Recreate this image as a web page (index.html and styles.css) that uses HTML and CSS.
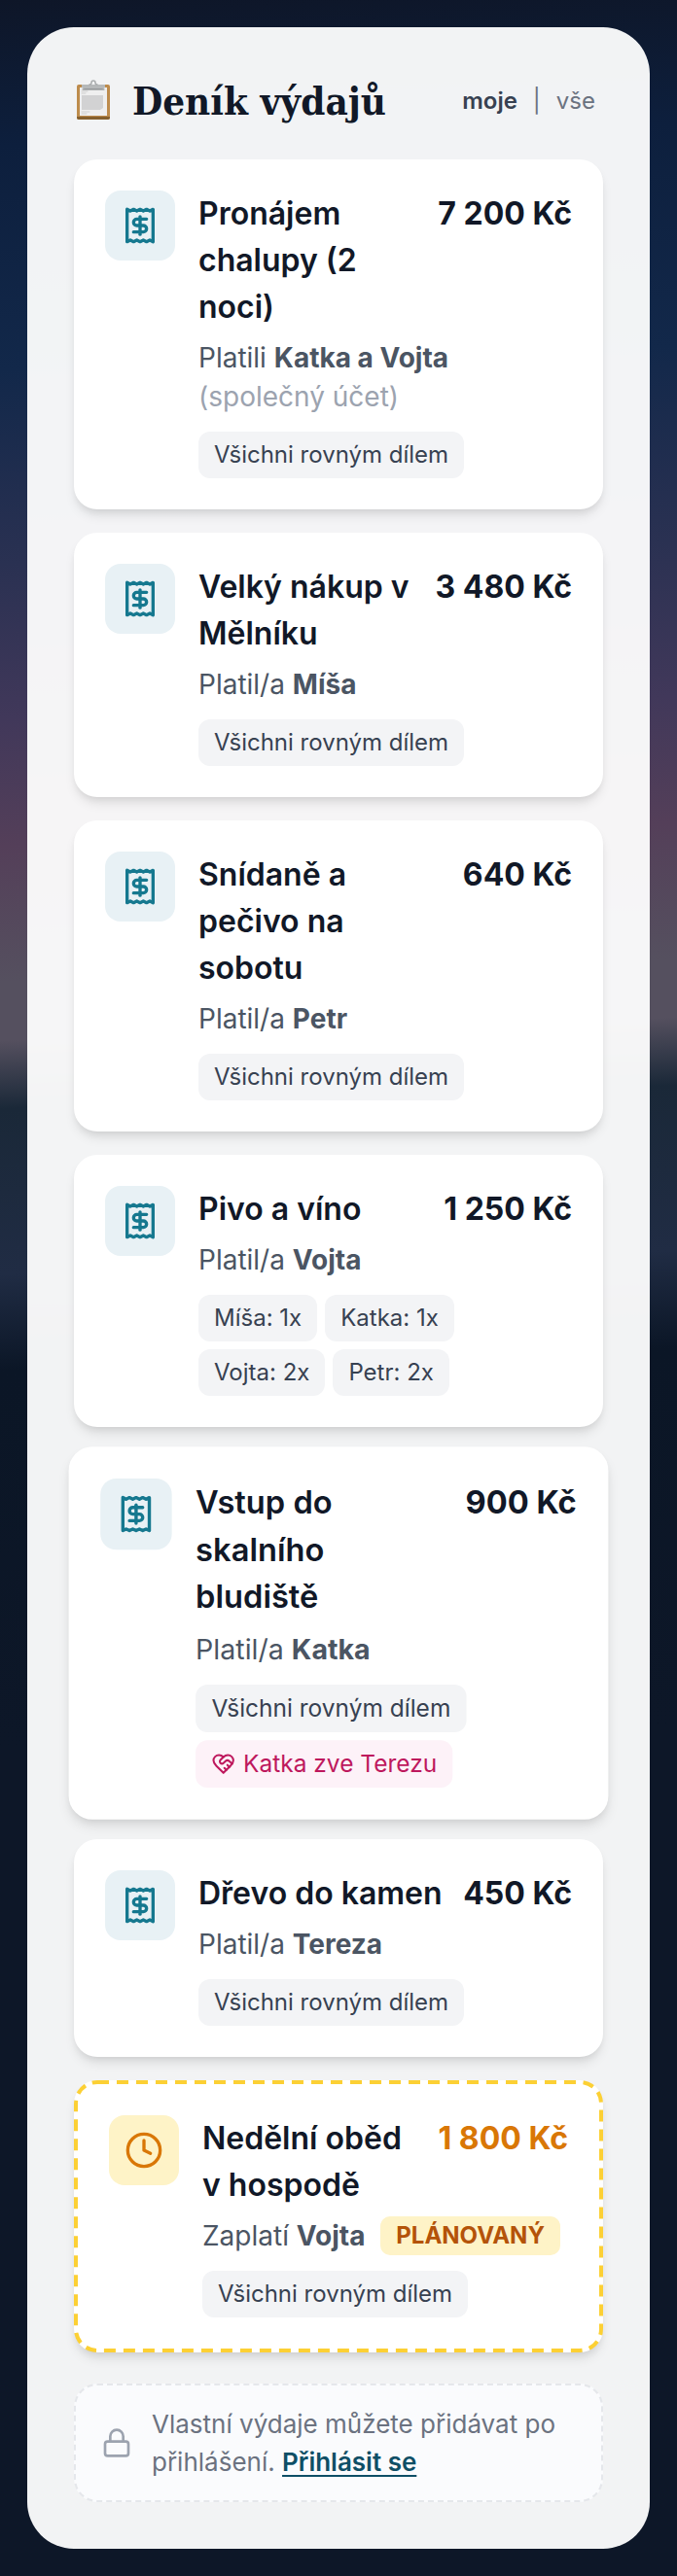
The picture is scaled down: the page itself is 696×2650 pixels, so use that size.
FILE: index.html
```html
<!DOCTYPE html>
<html lang="cs">

<head>
    <meta charset="UTF-8">
    <meta name="viewport" content="width=device-width, initial-scale=1.0">
    <title>Deník výdajů</title>
    <link rel="stylesheet" href="styles.css">
</head>

<body>
    <!-- shared icons -->
    <svg class="sprite" aria-hidden="true">
        <symbol id="receipt" viewBox="0 0 24 24">
            <path d="M4 2v20l2-1 2 1 2-1 2 1 2-1 2 1 2-1 2 1V2l-2 1-2-1-2 1-2-1-2 1-2-1-2 1Z" />
            <path d="M16 8h-6a2 2 0 1 0 0 4h4a2 2 0 1 1 0 4H8" />
            <path d="M12 17.5v-11" />
        </symbol>
        <symbol id="clock" viewBox="0 0 24 24">
            <circle cx="12" cy="12" r="10" />
            <path d="M12 6v6l4 2" />
        </symbol>
        <symbol id="lock" viewBox="0 0 24 24">
            <rect x="3" y="11" width="18" height="11" rx="2" />
            <path d="M7 11V7a5 5 0 0 1 10 0v4" />
        </symbol>
        <symbol id="heart" viewBox="0 0 24 24">
            <path d="M19 14c1.49-1.46 3-3.21 3-5.5A5.5 5.5 0 0 0 16.5 3c-1.76 0-3 .5-4.5 2-1.5-1.5-2.74-2-4.5-2A5.5 5.5 0 0 0 2 8.5c0 2.3 1.5 4.05 3 5.5l7 7Z" />
            <path d="M12 5 9.04 7.96a2.17 2.17 0 0 0 0 3.08c.82.82 2.13.85 3 .07l2.07-1.9a2.82 2.82 0 0 1 3.79 0l2.96 2.66" />
            <path d="m18 15-2-2" />
            <path d="m15 18-2-2" />
        </symbol>
    </svg>

    <main class="panel">
        <header class="panel-header">
            <svg class="clipboard" viewBox="0 0 40 44" aria-hidden="true">
                <rect x="3" y="5" width="34" height="36" rx="2" fill="#bd8b4c" />
                <path d="M3 38h34v1a2 2 0 0 1-2 2H5a2 2 0 0 1-2-2z" fill="#85602f" />
                <path d="M6 8h28v29H6z" fill="#efefef" />
                <path d="M8 16h22v13l-3 2H8z" fill="#d2d2d3" />
                <path d="M8 12h6M8 14h4M8 33h8M8 35h5" stroke="#cfcfcf" />
                <path d="M8 5h24v3l-3 2H11l-3-2z" fill="#b5b8b9" />
                <path d="M9 10h22" stroke="#777b7c" />
                <path d="M16 5c1 0 2-1 2-2a2 2 0 0 1 4 0c0 1 1 2 2 2" stroke="#a9acad" stroke-width="1.5" />
            </svg>
            <h1>Deník výdajů</h1>
            <div class="filter">
                <button type="button" class="active">moje</button>
                <span>|</span>
                <button type="button">vše</button>
            </div>
        </header>

        <div class="expenses">
            <article class="card">
                <div class="card-icon"><svg><use href="#receipt" /></svg></div>
                <div class="card-body">
                    <div class="card-top">
                        <h2>Pronájem chalupy (2 noci)</h2>
                        <div class="amount">7 200 Kč</div>
                    </div>
                    <p class="payer">Platili <strong>Katka a Vojta</strong> <span class="muted">(společný účet)</span></p>
                    <div class="tags"><span class="tag">Všichni rovným dílem</span></div>
                </div>
            </article>

            <article class="card">
                <div class="card-icon"><svg><use href="#receipt" /></svg></div>
                <div class="card-body">
                    <div class="card-top">
                        <h2>Velký nákup v Mělníku</h2>
                        <div class="amount">3 480 Kč</div>
                    </div>
                    <p class="payer">Platil/a <strong>Míša</strong></p>
                    <div class="tags"><span class="tag">Všichni rovným dílem</span></div>
                </div>
            </article>

            <article class="card">
                <div class="card-icon"><svg><use href="#receipt" /></svg></div>
                <div class="card-body">
                    <div class="card-top">
                        <h2>Snídaně a pečivo na sobotu</h2>
                        <div class="amount">640 Kč</div>
                    </div>
                    <p class="payer">Platil/a <strong>Petr</strong></p>
                    <div class="tags"><span class="tag">Všichni rovným dílem</span></div>
                </div>
            </article>

            <article class="card">
                <div class="card-icon"><svg><use href="#receipt" /></svg></div>
                <div class="card-body">
                    <div class="card-top">
                        <h2>Pivo a víno</h2>
                        <div class="amount">1 250 Kč</div>
                    </div>
                    <p class="payer">Platil/a <strong>Vojta</strong></p>
                    <div class="tags">
                        <span class="tag">Míša: 1x</span>
                        <span class="tag">Katka: 1x</span>
                        <span class="tag">Vojta: 2x</span>
                        <span class="tag">Petr: 2x</span>
                    </div>
                </div>
            </article>

            <article class="card raised">
                <div class="card-icon"><svg><use href="#receipt" /></svg></div>
                <div class="card-body">
                    <div class="card-top">
                        <h2>Vstup do skalního bludiště</h2>
                        <div class="amount">900 Kč</div>
                    </div>
                    <p class="payer">Platil/a <strong>Katka</strong></p>
                    <div class="tags">
                        <span class="tag">Všichni rovným dílem</span>
                        <span class="tag invite"><svg><use href="#heart" /></svg>Katka zve Terezu</span>
                    </div>
                </div>
            </article>

            <article class="card">
                <div class="card-icon"><svg><use href="#receipt" /></svg></div>
                <div class="card-body">
                    <div class="card-top">
                        <h2>Dřevo do kamen</h2>
                        <div class="amount">450 Kč</div>
                    </div>
                    <p class="payer">Platil/a <strong>Tereza</strong></p>
                    <div class="tags"><span class="tag">Všichni rovným dílem</span></div>
                </div>
            </article>

            <article class="card planned">
                <div class="card-icon"><svg><use href="#clock" /></svg></div>
                <div class="card-body">
                    <div class="card-top">
                        <h2>Nedělní oběd v hospodě</h2>
                        <div class="amount">1 800 Kč</div>
                    </div>
                    <p class="payer">Zaplatí <strong>Vojta</strong> <span class="badge">PLÁNOVANÝ</span></p>
                    <div class="tags"><span class="tag">Všichni rovným dílem</span></div>
                </div>
            </article>
        </div>

        <div class="login-note">
            <svg><use href="#lock" /></svg>
            <p>Vlastní výdaje můžete přidávat po přihlášení. <a href="#">Přihlásit se</a></p>
        </div>
    </main>
</body>

</html>
```
FILE: styles.css
```css
* {
    box-sizing: border-box;
}

body {
    margin: 0;
    padding: 28px;
    font-family: Inter, "Liberation Sans", sans-serif;
    color: #111827;
    background-color: #0d1728;
    /* night sky over the hills */
    background-image: linear-gradient(178deg, #0e1628 0, #0d1f3d 150px, #12284a 380px, #2a3152 580px, #41385a 740px, #543f59 870px, #55505f 1010px, #55505f 1070px, #1a2838 1140px, #202c44 1310px, #0b1626 1410px, #0d1728 1800px);
    background-repeat: no-repeat;
}

h1,
h2,
p {
    margin: 0;
}

svg {
    fill: none;
    stroke: currentColor;
    stroke-width: 2;
    stroke-linecap: round;
    stroke-linejoin: round;
    flex-shrink: 0;
}

.sprite {
    display: none;
}

.panel {
    padding: 48px;
    border-radius: 48px;
    background-color: rgba(255, 255, 255, 0.95);
}

.panel-header {
    display: flex;
    align-items: center;
    margin-bottom: 32px;
}

.clipboard {
    width: 40px;
    height: 44px;
    margin-right: 20px;
    stroke: none;
    stroke-width: 1;
}

.panel-header h1 {
    flex: 1;
    font-family: "DejaVu Serif Condensed", "DejaVu Serif", serif;
    font-size: 40px;
    line-height: 56px;
    font-weight: 700;
    white-space: nowrap;
}

.filter {
    display: flex;
    align-items: center;
    gap: 8px;
    color: #6b7280;
    font-size: 24px;
    line-height: 32px;
}

.filter button {
    padding: 0 8px;
    border: none;
    background: none;
    font: inherit;
    color: inherit;
    cursor: pointer;
}

.filter .active {
    font-weight: 600;
    color: #374151;
}

.expenses {
    display: flex;
    flex-direction: column;
    gap: 24px;
}

.card {
    display: flex;
    align-items: flex-start;
    gap: 24px;
    padding: 32px;
    border-radius: 24px;
    background-color: #fff;
    box-shadow: 0 8px 12px -2px rgba(0, 0, 0, 0.1), 0 4px 8px -4px rgba(0, 0, 0, 0.1);
}

.card.raised {
    transform: scale(1.02);
}

.card-icon {
    display: flex;
    flex-shrink: 0;
    padding: 16px;
    border-radius: 16px;
    background-color: #e8f1f5;
    color: #15788f;
}

.card-icon svg {
    width: 40px;
    height: 40px;
}

.card-body {
    flex: 1;
    min-width: 0;
}

.card-top {
    display: flex;
    justify-content: space-between;
    align-items: flex-start;
    gap: 16px;
}

.card-top h2,
.amount {
    font-size: 32px;
    line-height: 48px;
    font-weight: 600;
}

.amount {
    font-weight: 700;
    white-space: nowrap;
}

.payer {
    margin-top: 8px;
    font-size: 28px;
    line-height: 40px;
    color: #4b5563;
}

.muted {
    color: #9ca3af;
}

.tags {
    display: flex;
    flex-wrap: wrap;
    gap: 8px;
    margin-top: 16px;
}

.tag {
    display: flex;
    align-items: center;
    gap: 8px;
    padding: 8px 16px;
    border-radius: 12px;
    background-color: #f3f4f6;
    color: #374151;
    font-size: 24px;
    line-height: 32px;
}

.tag svg {
    width: 24px;
    height: 24px;
}

.invite {
    background-color: #fdf2f8;
    color: #be185d;
}

/* svg border, the native dashes are too short at this width */
.planned {
    border: 4px solid transparent;
    background-image: url("data:image/svg+xml,%3Csvg xmlns='http://www.w3.org/2000/svg'%3E%3Crect width='100%25' height='100%25' rx='24' fill='none' stroke='%23fcd034' stroke-width='8' stroke-dasharray='12 8'/%3E%3C/svg%3E");
    background-origin: border-box;
    background-size: 100% 100%;
    background-repeat: no-repeat;
}

.planned .card-icon {
    background-color: #fef3c7;
    color: #d97706;
}

.planned .amount {
    color: #d97706;
}

.badge {
    display: inline-block;
    margin-left: 8px;
    padding: 4px 16px;
    border-radius: 10px;
    background-color: #fef3c7;
    color: #b45309;
    font-size: 24px;
    line-height: 32px;
    font-weight: 700;
    vertical-align: top;
}

.login-note {
    display: flex;
    align-items: center;
    gap: 20px;
    margin-top: 32px;
    padding: 20px 26px;
    border: 2px dashed #e5e7eb;
    border-radius: 24px;
    background-color: #fafbfd;
    color: #6b7280;
    font-size: 26px;
    line-height: 39px;
}

.login-note svg {
    width: 32px;
    height: 32px;
    color: #9ca3af;
}

.login-note a {
    color: #0e4f66;
    font-weight: 600;
    text-underline-offset: 4px;
}
```
